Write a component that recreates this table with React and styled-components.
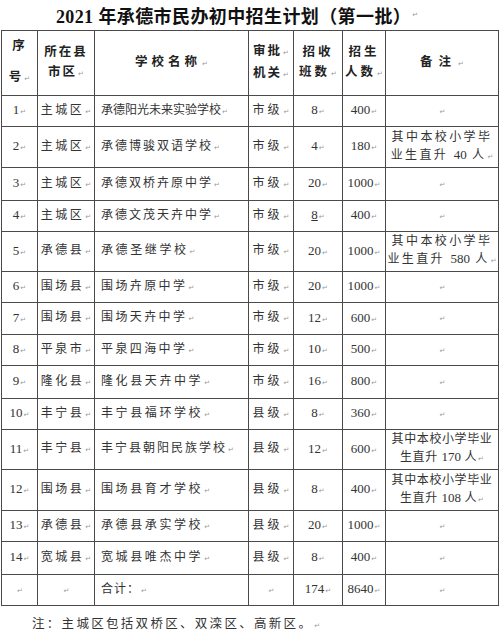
import React from "react";
import styled, { createGlobalStyle } from "styled-components";

const GlobalStyle = createGlobalStyle`
  body {
    margin: 0;
    background: #fff;
    font-family: "Liberation Serif", "Noto Sans CJK SC", serif;
    color: #333;
  }
`;

const rows = [
  { no: 1, area: "主城区", name: "承德阳光未来实验学校", nameLs: 0, level: "市级", classes: "8", students: "400", h: 31 },
  { no: 2, area: "主城区", name: "承德博骏双语学校", nameLs: 2, level: "市级", classes: "4", students: "180", note: ["其中本校小学毕", "业生直升 40 人"], noteLs: 2.4, h: 41 },
  { no: 3, area: "主城区", name: "承德双桥卉原中学", nameLs: 2, level: "市级", classes: "20", students: "1000", h: 33 },
  { no: 4, area: "主城区", name: "承德文茂天卉中学", nameLs: 2, level: "市级", classes: "8", underline: true, students: "400", h: 31 },
  { no: 5, area: "承德县", name: "承德圣继学校", nameLs: 2.6, level: "市级", classes: "20", students: "1000", note: ["其中本校小学毕", "业生直升 580 人"], noteLs: 2.4, h: 40 },
  { no: 6, area: "围场县", name: "围场卉原中学", nameLs: 2.4, level: "市级", classes: "20", students: "1000", h: 31 },
  { no: 7, area: "围场县", name: "围场天卉中学", nameLs: 2.4, level: "市级", classes: "12", students: "600", h: 32 },
  { no: 8, area: "平泉市", name: "平泉四海中学", nameLs: 2.4, level: "市级", classes: "10", students: "500", h: 31 },
  { no: 9, area: "隆化县", name: "隆化县天卉中学", nameLs: 2.6, level: "市级", classes: "16", students: "800", h: 33 },
  { no: 10, area: "丰宁县", name: "丰宁县福环学校", nameLs: 2.6, level: "县级", classes: "8", students: "360", h: 31 },
  { no: 11, area: "丰宁县", name: "丰宁县朝阳民族学校", nameLs: 2, level: "县级", classes: "12", students: "600", note: ["其中本校小学毕业", "生直升 170 人"], noteLs: 0.6, h: 40 },
  { no: 12, area: "围场县", name: "围场县育才学校", nameLs: 2.6, level: "县级", classes: "8", students: "400", note: ["其中本校小学毕业", "生直升 108 人"], noteLs: 0.6, h: 41 },
  { no: 13, area: "承德县", name: "承德县承实学校", nameLs: 2.6, level: "县级", classes: "20", students: "1000", h: 31 },
  { no: 14, area: "宽城县", name: "宽城县唯杰中学", nameLs: 2.6, level: "县级", classes: "8", students: "400", h: 33 },
];

const Page = styled.div`
  width: 500px;
  height: 630px;
  overflow: hidden;
`;

const Title = styled.h1`
  margin: 0;
  height: 30px;
  display: flex;
  align-items: center;
  justify-content: center;
  padding-right: 26px;
  font-size: 18px;
  font-weight: 700;
  color: #111;
  letter-spacing: 0.4px;
`;

const Table = styled.table`
  margin-left: 1px;
  width: 497px;
  border-collapse: collapse;
  table-layout: fixed;
`;

const Row = styled.tr`
  height: ${(p) => p.$h}px;
`;

const Th = styled.th`
  border: 1px solid #4a4a4a;
  padding: 0;
  font-size: 12.5px;
  font-weight: 700;
  color: #222;
  line-height: ${(p) => p.$lh || 20}px;
  letter-spacing: ${(p) => p.$ls || 2}px;
  text-align: center;
  vertical-align: middle;
`;

const Td = styled.td`
  border: 1px solid #4a4a4a;
  padding: ${(p) => (p.$left ? "0 0 0 6px" : "0")};
  font-size: ${(p) => (p.$num ? 13 : 12)}px;
  line-height: 17px;
  letter-spacing: ${(p) => p.$ls || 0}px;
  text-align: ${(p) => (p.$left ? "left" : "center")};
  vertical-align: middle;
  white-space: nowrap;
  overflow: hidden;
`;

const Num = styled.span`
  font-size: 13px;
  letter-spacing: 0;
  text-decoration: ${(p) => (p.$underline ? "underline" : "none")};
`;

const Mark = styled.span`
  font-family: "DejaVu Sans", sans-serif;
  font-size: 7px;
  font-weight: 400;
  color: #9a9a9a;
  letter-spacing: 0;
  margin-left: 1px;
`;

const Footnote = styled.p`
  margin: 0;
  padding: 7px 0 0 32px;
  font-size: 12.5px;
  letter-spacing: 2.3px;
  color: #333;
`;

const M = () => <Mark>↵</Mark>;

// digits inside a note line keep their own spacing
const NoteLine = ({ text }) =>
  text.split(/(\d+)/).map((part, i) =>
    /^\d+$/.test(part) ? <Num key={i}>{part}</Num> : <React.Fragment key={i}>{part}</React.Fragment>
  );

export default function App() {
  return (
    <Page>
      <GlobalStyle />
      <Title>
        2021 年承德市民办初中招生计划（第一批）
        <M />
      </Title>
      <Table>
        <colgroup>
          <col style={{ width: 36 }} />
          <col style={{ width: 57 }} />
          <col style={{ width: 154 }} />
          <col style={{ width: 45 }} />
          <col style={{ width: 49 }} />
          <col style={{ width: 43 }} />
          <col style={{ width: 113 }} />
        </colgroup>
        <thead>
          <Row $h={63}>
            <Th $lh={31} $ls={0}>
              序<br />号<M />
            </Th>
            <Th $ls={2}>
              所在县<br />市区<M />
            </Th>
            <Th $ls={4}>
              学校名称<M />
            </Th>
            <Th $ls={2}>
              审批<M /><br />机关<M />
            </Th>
            <Th $ls={3}>
              招收<br />班数<M />
            </Th>
            <Th $ls={3}>
              招生<br />人数<M />
            </Th>
            <Th $ls={6}>
              备注<M />
            </Th>
          </Row>
        </thead>
        <tbody>
          {rows.map((r) => (
            <Row key={r.no} $h={r.h}>
              <Td $num>
                {r.no}
                <M />
              </Td>
              <Td $ls={2.5}>
                {r.area}
                <M />
              </Td>
              <Td $left $ls={r.nameLs}>
                {r.name}
                <M />
              </Td>
              <Td $ls={3}>
                {r.level}
                <M />
              </Td>
              <Td $num>
                <Num $underline={r.underline}>{r.classes}</Num>
                <M />
              </Td>
              <Td $num>
                {r.students}
                <M />
              </Td>
              {r.note ? (
                <Td $ls={r.noteLs}>
                  {r.note[0]}
                  <br />
                  <NoteLine text={r.note[1]} />
                  <M />
                </Td>
              ) : (
                <Td>
                  <M />
                </Td>
              )}
            </Row>
          ))}
          <Row $h={31}>
            <Td>
              <M />
            </Td>
            <Td>
              <M />
            </Td>
            <Td $left $ls={1}>
              合计：<M />
            </Td>
            <Td>
              <M />
            </Td>
            <Td $num>
              174<M />
            </Td>
            <Td $num>
              8640<M />
            </Td>
            <Td>
              <M />
            </Td>
          </Row>
        </tbody>
      </Table>
      <Footnote>
        注：主城区包括双桥区、双滦区、高新区。<M />
      </Footnote>
    </Page>
  );
}
